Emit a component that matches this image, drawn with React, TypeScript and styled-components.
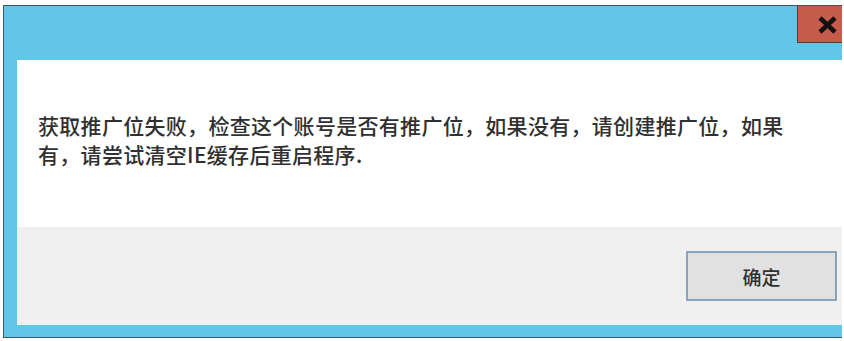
import React from 'react';
import styled, { createGlobalStyle } from 'styled-components';

const GlobalStyle = createGlobalStyle`
    html, body {
        margin: 0;
        padding: 0;
        background: #ffffff;
        overflow: hidden;
    }
    body {
        font-family: "Noto Sans CJK SC", "Noto Sans", sans-serif;
    }
`;

const Window = styled.div`
    margin: 5px 0 0 3px;
    width: 839px;
    box-sizing: border-box;
    background: #62c6e8;
    border: 1px solid #3f5666;
    border-right: none;
    padding: 0 0 12px 13px;
`;

const TitleBar = styled.div`
    height: 54px;
    display: flex;
    justify-content: flex-end;
    align-items: flex-start;
`;

const CloseButton = styled.div`
    margin-top: -1px;
    width: 45px;
    height: 38px;
    box-sizing: border-box;
    background: #c75b4b;
    border: 1px solid #5a3a34;
    border-top-color: #3f5666;
    border-right: none;
    display: flex;
    align-items: center;
    justify-content: center;
    padding-left: 14px;
    padding-top: 2px;
`;

const Client = styled.div`
    height: 265px;
    display: flex;
    flex-direction: column;
    background: #ffffff;
`;

const MessageArea = styled.div`
    height: 167px;
    box-sizing: border-box;
    padding: 51px 0 0 21px;
`;

const Message = styled.p`
    margin: 0;
    width: 765px;
    font-size: 21px;
    font-weight: 500;
    line-height: 29px;
    letter-spacing: 0.3px;
    color: #303030;
`;

const Footer = styled.div`
    flex: 1;
    display: flex;
    justify-content: flex-end;
    align-items: flex-start;
    padding: 24px 5px 0 0;
    background: #f0f0f0;
`;

const Button = styled.button`
    width: 151px;
    height: 50px;
    box-sizing: border-box;
    background: #e1e1e1;
    border: 2px solid #8aa2bd;
    font-family: "Noto Sans CJK SC", "Noto Sans", sans-serif;
    font-size: 19px;
    font-weight: 500;
    color: #303030;
    padding: 0;
`;

const CloseIcon = () => (
    <svg width="21" height="18" viewBox="0 0 21 18">
        <path d="M3 2 L18 16 M18 2 L3 16" stroke="#111" strokeWidth="4.5" strokeLinecap="butt" />
    </svg>
);

export default function App() {
    return (
        <>
            <GlobalStyle />
            <Window>
                <TitleBar>
                    <CloseButton>
                        <CloseIcon />
                    </CloseButton>
                </TitleBar>
                <Client>
                    <MessageArea>
                        <Message>
                            获取推广位失败，检查这个账号是否有推广位，如果没有，请创建推广位，如果有，请尝试清空IE缓存后重启程序.
                        </Message>
                    </MessageArea>
                    <Footer>
                        <Button>确定</Button>
                    </Footer>
                </Client>
            </Window>
        </>
    );
}
